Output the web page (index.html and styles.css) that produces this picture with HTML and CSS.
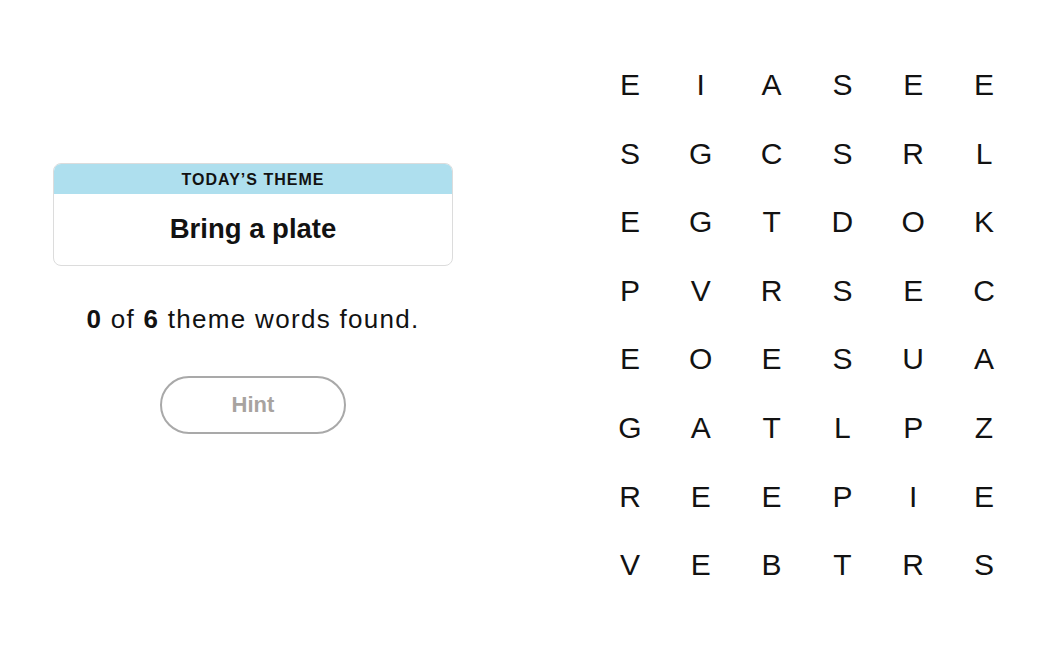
FILE: index.html
```html
<!DOCTYPE html>
<html>
<head>
<meta charset="utf-8">
<link rel="stylesheet" href="styles.css">
</head>
<body>
<div class="page">
  <section class="panel">
    <div class="theme-card">
      <div class="theme-head">TODAY’S THEME</div>
      <div class="theme-body">Bring a plate</div>
    </div>
    <p class="progress"><b>0</b> of <b>6</b> theme words found.</p>
    <button class="hint">Hint</button>
  </section>
  <section class="grid">
    <span>E</span><span>I</span><span>A</span><span>S</span><span>E</span><span>E</span>
    <span>S</span><span>G</span><span>C</span><span>S</span><span>R</span><span>L</span>
    <span>E</span><span>G</span><span>T</span><span>D</span><span>O</span><span>K</span>
    <span>P</span><span>V</span><span>R</span><span>S</span><span>E</span><span>C</span>
    <span>E</span><span>O</span><span>E</span><span>S</span><span>U</span><span>A</span>
    <span>G</span><span>A</span><span>T</span><span>L</span><span>P</span><span>Z</span>
    <span>R</span><span>E</span><span>E</span><span>P</span><span>I</span><span>E</span>
    <span>V</span><span>E</span><span>B</span><span>T</span><span>R</span><span>S</span>
  </section>
</div>
</body>
</html>
```

FILE: styles.css
```css
* { box-sizing: border-box; }
html, body { margin: 0; padding: 0; background: #fff; }
body { font-family: "Liberation Sans", Arial, sans-serif; color: #121212; }
.page { display: flex; width: 1063px; height: 657px; }
.panel {
  width: 506px;
  display: flex;
  flex-direction: column;
  align-items: center;
  padding-top: 163px;
}
.theme-card {
  width: 400px;
  height: 103px;
  border: 1px solid #dcdcdc;
  border-radius: 8px;
  overflow: hidden;
  display: flex;
  flex-direction: column;
}
.theme-head {
  height: 30px;
  background: #aedfee;
  display: flex;
  align-items: center;
  justify-content: center;
  font-weight: 700;
  font-size: 16px;
  letter-spacing: 1px;
  padding-top: 1px;
}
.theme-body {
  flex: 1;
  display: flex;
  align-items: center;
  justify-content: center;
  font-weight: 700;
  font-size: 27.5px;
  padding-bottom: 2px;
}
.progress {
  margin: 36px 0 0;
  font-size: 26px;
  line-height: 34px;
  letter-spacing: 1.3px;
}
.progress b { font-weight: 700; }
.hint {
  margin-top: 40px;
  width: 186px;
  height: 58px;
  border: 2px solid #a9a9a9;
  border-radius: 29px;
  background: #fff;
  color: #a8a39f;
  font-family: "Liberation Sans", Arial, sans-serif;
  font-weight: 700;
  font-size: 22px;
  padding: 0;
}
.grid {
  margin-left: 88.6px;
  padding-top: 50.7px;
  display: grid;
  grid-template-columns: repeat(6, 70.8px);
  grid-template-rows: repeat(8, 68.6px);
}
.grid span {
  display: flex;
  align-items: center;
  justify-content: center;
  font-size: 30px;
  color: #121212;
}
```
